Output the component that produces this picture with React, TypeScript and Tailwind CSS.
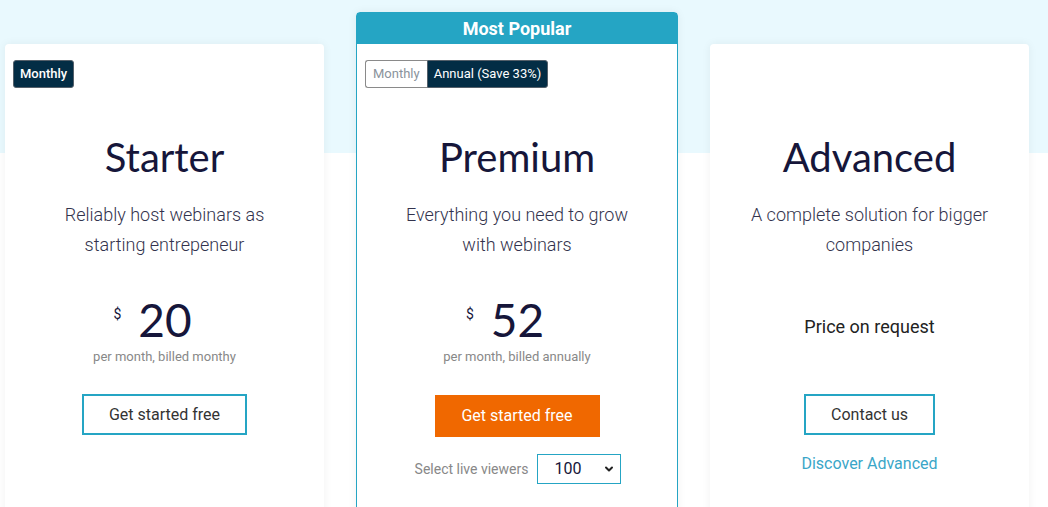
import React from 'react';

const heading = "font-['Lato',sans-serif] text-[40px] leading-[48px] text-[#16163a] text-center";
const desc = "mt-[19px] px-10 text-center text-[18px] leading-[30px] font-light text-[#33334d]";

function Price({ amount, note }: { amount: string; note: string }) {
  return (
    <div className="mt-[37px] flex flex-col items-center h-[67px]">
      <div className="flex items-start pr-6">
        <span className="text-[14px] leading-none mt-[10px] mr-[17px] text-[#16163a]">$</span>
        <span className="font-['Lato',sans-serif] text-[46px] leading-[46px] text-[#16163a]">{amount}</span>
      </div>
      <div className="mt-[6px] text-[13px] leading-4 text-[#888]">{note}</div>
    </div>
  );
}

function Card({ children }: { children: React.ReactNode }) {
  return (
    <div className="mt-8 w-[319px] h-[480px] bg-white rounded-t shadow-[0_0_10px_rgba(0,0,0,0.06)] pt-4 px-2">
      {children}
    </div>
  );
}

export default function App() {
  return (
    <div className="h-[507px] overflow-hidden bg-[linear-gradient(to_bottom,#e9f9fe_153px,#ffffff_153px)] font-['Roboto',sans-serif]">
      <div className="flex items-start gap-8 pl-[5px] pt-3">
        <Card>
          <div className="flex">
            <span className="h-7 px-[6px] flex items-center rounded-[3px] border border-[#55606a] bg-[#032d45] text-white text-[13px] font-medium">
              Monthly
            </span>
          </div>
          <div className="mt-[45px] -mx-2">
            <h2 className={heading}>Starter</h2>
            <p className={desc}>Reliably host webinars as starting entrepeneur</p>
            <Price amount="20" note="per month, billed monthy" />
            <div className="mt-[30px] flex justify-center">
              <button className="w-[165px] h-[41px] border-2 border-[#25a5c4] text-[16px] text-[#333]">
                Get started free
              </button>
            </div>
          </div>
        </Card>

        <div className="w-[322px] h-[510px] bg-white rounded-t border border-[#25a5c4] shadow-[0_0_10px_rgba(0,0,0,0.06)]">
          <div className="h-[31px] bg-[#25a5c4] flex items-center justify-center text-white text-[18px] font-bold">
            Most Popular
          </div>
          <div className="pt-4 px-2">
            <div className="flex text-[13px]">
              <span className="h-7 px-[7px] flex items-center rounded-l-[3px] border border-[#8a8a8a] border-r-0 text-[#8a939c]">
                Monthly
              </span>
              <span className="h-7 px-[6px] flex items-center rounded-r-[3px] border border-[#55606a] bg-[#032d45] text-white">
                Annual (Save 33%)
              </span>
            </div>
          </div>
          <div className="mt-[45px]">
            <h2 className={heading}>Premium</h2>
            <p className={desc}>Everything you need to grow with webinars</p>
            <Price amount="52" note="per month, billed annually" />
            <div className="mt-[31px] flex justify-center">
              <button className="w-[165px] h-[42px] bg-[#f06800] text-[16px] text-white">
                Get started free
              </button>
            </div>
            <div className="mt-[17px] flex items-center justify-center gap-[9px] pl-[2px]">
              <span className="text-[14px] text-[#888]">Select live viewers</span>
              <div className="w-[84px] h-[30px] border border-[#25a5c4] flex items-center justify-between pl-4 pr-[5px] text-[16px] text-[#16163a]">
                <span>100</span>
                <svg width="12" height="12" viewBox="0 0 12 12" fill="none" stroke="#222" strokeWidth="2" strokeLinecap="round" strokeLinejoin="round">
                  <path d="M3 4.5 6 7.5 9 4.5" />
                </svg>
              </div>
            </div>
          </div>
        </div>

        <Card>
          <div className="h-7" />
          <div className="mt-[45px] -mx-2">
            <h2 className={heading}>Advanced</h2>
            <p className={desc}>A complete solution for bigger companies</p>
            <div className="mt-[37px] h-[67px] flex justify-center pt-4 text-[18px] text-[#222]">
              Price on request
            </div>
            <div className="mt-[30px] flex justify-center">
              <button className="w-[131px] h-[41px] border-2 border-[#25a5c4] text-[16px] text-[#333]">
                Contact us
              </button>
            </div>
            <div className="mt-[17px] text-center text-[16px] text-[#3aa6c8]">Discover Advanced</div>
          </div>
        </Card>
      </div>
    </div>
  );
}
